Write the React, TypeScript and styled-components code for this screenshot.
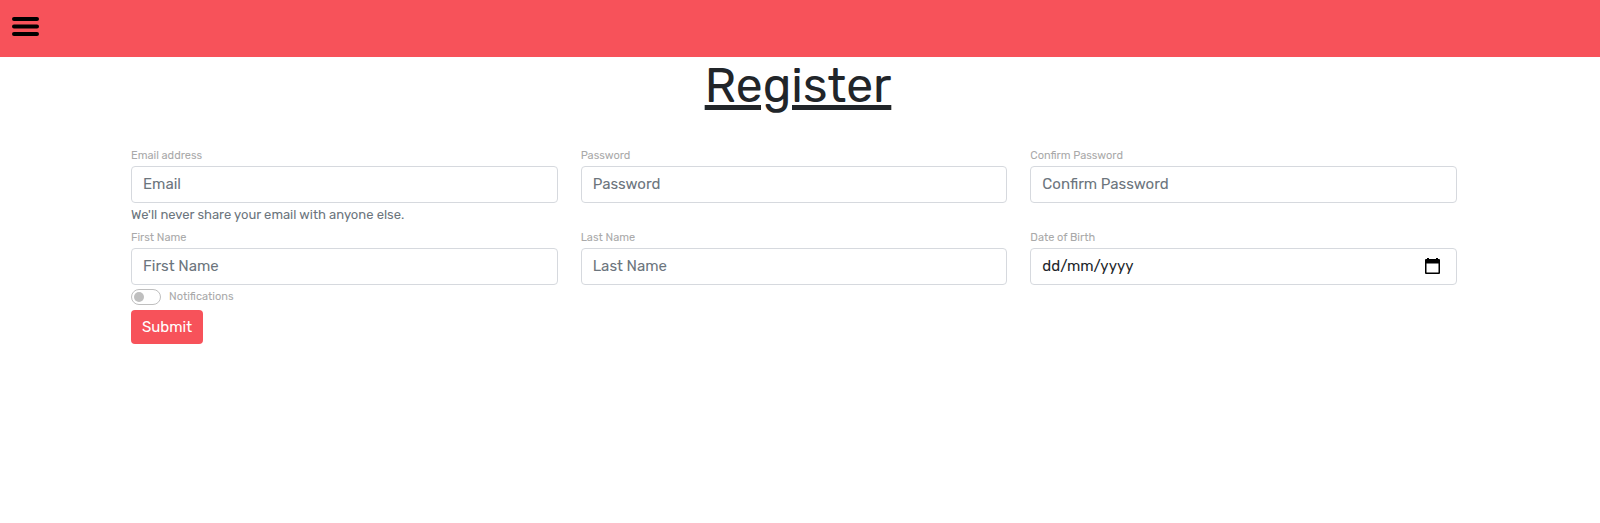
import React from "react";
import styled, { createGlobalStyle } from "styled-components";

const GlobalStyle = createGlobalStyle`
  *, *::before, *::after { box-sizing: border-box; }
  body {
    margin: 0;
    background: #fff;
    color: #212529;
    font-family: Rubik, Inter, Roboto, sans-serif;
    font-size: 15px;
    line-height: 24px;
  }
`;

const TopBar = styled.header`
  display: flex;
  align-items: flex-start;
  height: 57px;
  padding: 12px;
  background: #f7525a;
`;

const MenuButton = styled.button`
  display: flex;
  padding: 0;
  border: 0;
  background: none;
  cursor: pointer;
`;

const Title = styled.h1`
  margin: 0;
  padding-right: 4px;
  font-size: 48px;
  font-weight: 400;
  line-height: 58px;
  text-align: center;
  text-decoration: underline;
  text-decoration-thickness: 5px;
  text-underline-offset: 3px;
`;

const Form = styled.form`
  padding: 32px 143px 0 131px;
`;

const Fields = styled.div`
  display: grid;
  grid-template-columns: repeat(3, 1fr);
  column-gap: 23px;
  row-gap: 2px;
`;

const Field = styled.div`
  display: flex;
  flex-direction: column;
`;

const Label = styled.label`
  color: #a9a9a9;
  font-size: 11px;
  line-height: 17px;
`;

const FieldLabel = styled(Label)`
  padding-bottom: 2px;
`;

const Control = styled.div`
  position: relative;
  display: flex;
`;

const TextInput = styled.input<{ $dark?: boolean }>`
  width: 100%;
  height: 37px;
  padding: 0 11px 2px;
  border: 1px solid #d6d9de;
  border-radius: 4px;
  background: #fff;
  color: #212529;
  font: inherit;
  &::placeholder {
    color: ${(p) => (p.$dark ? "#212529" : "#6c757d")};
    opacity: 1;
  }
`;

const CalendarButton = styled.button`
  position: absolute;
  top: 9px;
  right: 16px;
  display: flex;
  padding: 0;
  border: 0;
  background: none;
  cursor: pointer;
`;

const Help = styled.small`
  color: #6c757d;
  font-size: 13px;
`;

const SwitchRow = styled.div`
  display: flex;
  align-items: center;
  gap: 8px;
  height: 25px;
  padding-bottom: 2px;
`;

const Switch = styled.input`
  appearance: none;
  display: flex;
  align-items: center;
  width: 30px;
  height: 16px;
  margin: 0;
  padding: 0 2px;
  border: 1px solid #bfbfbf;
  border-radius: 8px;
  &::before {
    content: "";
    width: 10px;
    height: 10px;
    border-radius: 50%;
    background: #bfbfbf;
  }
  &:checked {
    justify-content: flex-end;
  }
`;

const SubmitButton = styled.button`
  display: block;
  height: 34px;
  padding: 0 11px 1px;
  border: 0;
  border-radius: 4px;
  background: #f7525a;
  color: #fff;
  font: inherit;
  cursor: pointer;
`;

type FieldProps = {
  id: string;
  label: string;
  placeholder: string;
  type?: string;
  help?: string;
};

const TextField = ({ id, label, placeholder, type = "text", help }: FieldProps) => (
  <Field>
    <FieldLabel htmlFor={id}>{label}</FieldLabel>
    <TextInput id={id} type={type} placeholder={placeholder} />
    {help && <Help>{help}</Help>}
  </Field>
);

export default function App() {
  return (
    <>
      <GlobalStyle />
      <TopBar>
        <MenuButton type="button" aria-label="Menu">
          <svg width="27" height="28" viewBox="0 0 27 28" stroke="#000" strokeWidth="4" strokeLinecap="round">
            <path d="M2 7h23M2 14.5h23M2 22h23" />
          </svg>
        </MenuButton>
      </TopBar>
      <main>
        <Title>Register</Title>
        <Form onSubmit={(e) => e.preventDefault()}>
          <Fields>
            <TextField
              id="email"
              label="Email address"
              placeholder="Email"
              type="email"
              help="We'll never share your email with anyone else."
            />
            <TextField id="password" label="Password" placeholder="Password" type="password" />
            <TextField id="confirm" label="Confirm Password" placeholder="Confirm Password" type="password" />
            <TextField id="first" label="First Name" placeholder="First Name" />
            <TextField id="last" label="Last Name" placeholder="Last Name" />
            <Field>
              <FieldLabel htmlFor="birth">Date of Birth</FieldLabel>
              <Control>
                <TextInput id="birth" type="text" inputMode="numeric" placeholder="dd/mm/yyyy" $dark />
                <CalendarButton type="button" aria-label="Choose date">
                  <svg width="17" height="18" viewBox="0 0 17 18">
                    <path
                      fillRule="evenodd"
                      d="M3 1h2v1h7V1h2v1h1q1 0 1 1v13q0 1-1 1H2q-1 0-1-1V3q0-1 1-1h1zM2.5 6.500v9h12v-9z"
                    />
                  </svg>
                </CalendarButton>
              </Control>
            </Field>
          </Fields>
          <SwitchRow>
            <Switch id="notifications" type="checkbox" role="switch" />
            <Label htmlFor="notifications">Notifications</Label>
          </SwitchRow>
          <SubmitButton type="submit">Submit</SubmitButton>
        </Form>
      </main>
    </>
  );
}
